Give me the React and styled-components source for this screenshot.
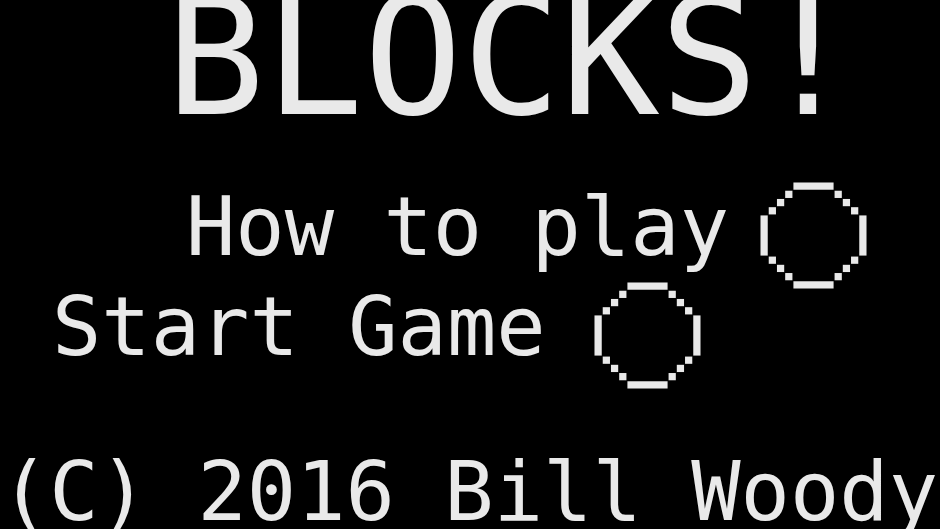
import React from 'react';
import styled, { createGlobalStyle } from 'styled-components';

const INK = '#e9e9e9';

const GlobalStyle = createGlobalStyle`
  html, body {
    margin: 0;
    padding: 0;
    background: #000;
    overflow: hidden;
  }
`;

const Screen = styled.div`
  width: 940px;
  height: 529px;
  background: #000;
  color: ${INK};
  font-family: 'DejaVu Sans Mono', 'Liberation Mono', monospace;
  overflow: hidden;
  display: flex;
  flex-direction: column;
`;

const Title = styled.h1`
  margin: 0;
  padding-left: 166px;
  font-size: 164px;
  font-weight: normal;
  line-height: 116px;
  white-space: pre;
`;

const Menu = styled.div`
  display: flex;
  flex-direction: column;
  margin-top: 70px;
`;

const MenuRow = styled.div`
  display: flex;
  align-items: flex-start;
  padding-left: ${p => p.indent}px;
`;

const Label = styled.span`
  font-size: 82px;
  line-height: 82px;
  white-space: pre;
`;

const Radio = styled.svg`
  flex: none;
  width: 107px;
  height: 107px;
  margin: -4px 0 -3px ${p => p.gap}px;
`;

const Footer = styled.div`
  margin-top: 65px;
  font-size: 82px;
  line-height: 82px;
  white-space: pre;
`;

// pixel circle on a 13x13 grid, as drawn by the little LCD font
const RING = [
  [4, 0, 5], [3, 1, 1], [9, 1, 1], [2, 2, 1], [10, 2, 1], [1, 3, 1], [11, 3, 1],
  [0, 4, 1, 5], [12, 4, 1, 5],
  [1, 9, 1], [11, 9, 1], [2, 10, 1], [10, 10, 1], [3, 11, 1], [9, 11, 1], [4, 12, 5],
];

const PixelCircle = ({ gap }) => (
  <Radio gap={gap} viewBox="0 0 13 13" aria-hidden="true">
    {RING.map(([x, y, w, h = 1], i) => (
      <rect key={i} x={x + 0.06} y={y + 0.06} width={w - 0.12} height={h - 0.12} fill={INK} />
    ))}
  </Radio>
);

const items = [
  { label: 'How to play', indent: 186, gap: 31 },
  { label: 'Start Game', indent: 52, gap: 48 },
];

export default function App() {
  return (
    <>
      <GlobalStyle />
      <Screen>
        <Title>BLOCKS!</Title>
        <Menu>
          {items.map(item => (
            <MenuRow key={item.label} indent={item.indent}>
              <Label>{item.label}</Label>
              <PixelCircle gap={item.gap} />
            </MenuRow>
          ))}
        </Menu>
        <Footer>(C) 2016 Bill Woody</Footer>
      </Screen>
    </>
  );
}
